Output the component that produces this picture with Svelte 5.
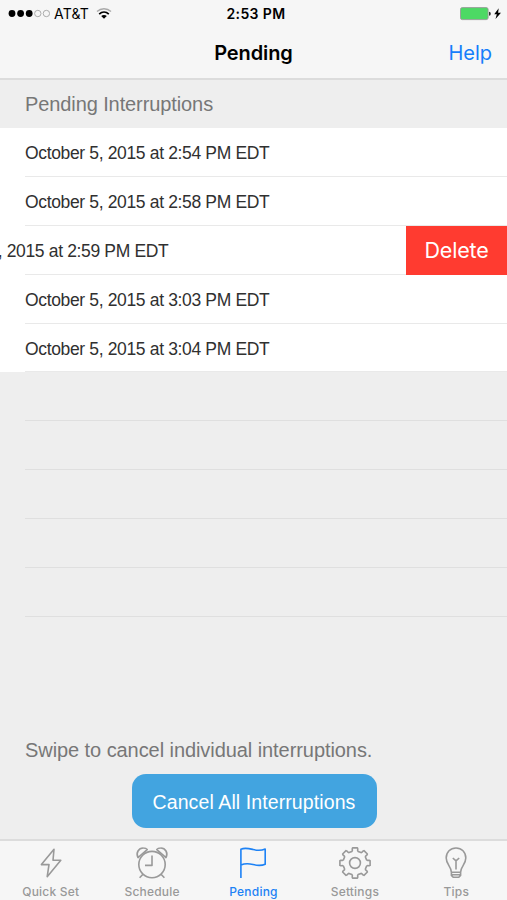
<script>
  const swipeWidth = 101;

  let rows = [
    { time: 'October 5, 2015 at 2:54 PM EDT' },
    { time: 'October 5, 2015 at 2:58 PM EDT' },
    { time: 'October 5, 2015 at 2:59 PM EDT', swiped: true },
    { time: 'October 5, 2015 at 3:03 PM EDT' },
    { time: 'October 5, 2015 at 3:04 PM EDT' }
  ];

  const emptyRows = [1, 2, 3, 4, 5];

  const tabs = [
    { id: 'quick', label: 'Quick Set' },
    { id: 'schedule', label: 'Schedule' },
    { id: 'pending', label: 'Pending' },
    { id: 'settings', label: 'Settings' },
    { id: 'tips', label: 'Tips' }
  ];
  let active = $state('pending');

  // Outline of the settings gear, eight teeth around the centre
  function gearPath(teeth, inner, outer) {
    const step = 360 / teeth;
    const points = [];
    for (let i = 0; i < teeth; i++) {
      const corners = [[-15, inner], [-12, inner + 0.7], [-11, outer - 0.8], [-9, outer], [9, outer], [11, outer - 0.8], [12, inner + 0.7], [15, inner]];
      for (const [offset, r] of corners) {
        const a = ((i * step + offset) * Math.PI) / 180;
        points.push(`${(17 + r * Math.sin(a)).toFixed(2)} ${(17 - r * Math.cos(a)).toFixed(2)}`);
      }
    }
    return `M${points.join('L')}Z`;
  }
</script>

<div class="screen">
  <header>
    <div class="status">
      <div class="carrier">
        <svg width="42" height="10" viewBox="0 0 42 10">
          <g fill="#000">
            <circle cx="4" cy="4.5" r="3.4" />
            <circle cx="12.6" cy="4.5" r="3.4" />
            <circle cx="21.2" cy="4.5" r="3.4" />
          </g>
          <g fill="none" stroke="#999" stroke-width="0.8">
            <circle cx="29.8" cy="4.5" r="3.2" />
            <circle cx="38.4" cy="4.5" r="3.2" />
          </g>
        </svg>
        <span class="network">AT&amp;T</span>
        <svg class="wifi" width="16" height="12" viewBox="0 0 16 12">
          <path d="M1 3.6C5 -.2 11 -.2 15 3.6" fill="none" stroke="#aaa" stroke-width="1.4" />
          <path d="M3.2 6.1C6 3.5 10 3.5 12.8 6.1" fill="none" stroke="#000" stroke-width="1.7" />
          <path d="M5.2 8C6.8 6.5 9.2 6.5 10.8 8L8 10.8Z" fill="#000" />
        </svg>
      </div>
      <span class="clock">2:53 PM</span>
      <svg class="battery" width="42" height="14" viewBox="0 0 42 14">
        <rect x="0.5" y="0.6" width="27.6" height="12" rx="1.8" fill="#4cd964" stroke="#999" stroke-width="0.9" />
        <path d="M29 4.7q1.8 0 1.8 2t-1.8 2z" fill="#333" />
        <path d="M38.7 1.2L34.2 7.3h2.6L35.5 12.1L41 5.7h-2.9z" fill="#000" />
      </svg>
    </div>
    <nav>
      <h1>Pending</h1>
      <button class="help">Help</button>
    </nav>
  </header>

  <main>
    <h2>Pending Interruptions</h2>
    <ul>
      {#each rows as row}
        <li class="row">
          <span class="time" style:margin-left={row.swiped ? `${-swipeWidth}px` : '0'}>{row.time}</span>
          {#if row.swiped}
            <button class="delete">Delete</button>
          {/if}
        </li>
      {/each}
      {#each emptyRows as n (n)}
        <li class="row empty"></li>
      {/each}
    </ul>
    <div class="actions">
      <p>Swipe to cancel individual interruptions.</p>
      <button class="cancel">Cancel All Interruptions</button>
    </div>
  </main>

  <footer>
    {#each tabs as tab (tab.id)}
      <button class="tab" class:active={active === tab.id} onclick={() => (active = tab.id)}>
        <svg width="34" height="34" viewBox="0 0 34 34">
          {#if tab.id === 'quick'}
            <path d="M20 3.2L7.4 18.6L15 18.6L13.2 30.7L26.8 14.3L19 14.3Z" />
          {:else if tab.id === 'schedule'}
            <circle cx="17" cy="18.6" r="13.2" />
            <path d="M17 9.4V19.4H10M8 28.2L4.6 31.8M26 28.2L29.4 31.8" />
            <path d="M3 11.6C.6 7 3.6 1.8 8.4 2q2.6 0 3.8 1.6z" />
            <path d="M31 11.6C33.4 7 30.4 1.8 25.6 2q-2.6 0-3.8 1.6z" />
          {:else if tab.id === 'pending'}
            <path d="M4.9 32V3.2C9 1.4 13 2.5 17 3.5S25 4.8 29.2 3V18.2C25 20 21 19.5 17 18.5S9 17.2 4.9 19" />
          {:else if tab.id === 'settings'}
            <path d={gearPath(8, 12, 15.3)} />
            <circle cx="17" cy="17" r="5.4" />
          {:else}
            <path d="M12.4 26.2C12.4 20.5 7.2 18.5 7.2 12C7.2 6 11.4 2 17 2S26.8 6 26.8 12C26.8 18.5 21.6 20.5 21.6 26.2ZM12.4 26.2V29.4L14.2 31.3H19.8L21.6 29.4V26.2M12.4 28.8H21.6M17 23.5V14.8L13.8 12M17 14.8L20.2 12" />
          {/if}
        </svg>
        <span>{tab.label}</span>
      </button>
    {/each}
  </footer>
</div>

<style>
  :global(body) {
    margin: 0;
    background: #eee;
  }

  .screen {
    display: flex;
    flex-direction: column;
    width: 507px;
    height: 900px;
    overflow: hidden;
    background: #eee;
    font-family: "Liberation Sans", Arial, sans-serif;
  }

  button {
    padding: 0;
    border: 0;
    background: none;
    font: inherit;
    white-space: nowrap;
  }

  header {
    box-sizing: border-box;
    height: 80px;
    border-bottom: 2px solid #dcdcdc;
    background: #f6f6f6;
    font-family: Inter, sans-serif;
  }

  .status {
    display: grid;
    grid-template-columns: 1fr auto 1fr;
    align-items: center;
    height: 27px;
    padding: 0 5px 0 8px;
  }

  .carrier {
    display: flex;
    align-items: center;
  }

  .network {
    margin-left: 4px;
    font-size: 14px;
    letter-spacing: 0.2px;
  }

  .wifi {
    margin-left: 7px;
  }

  .clock {
    padding-left: 2px;
    font-size: 14px;
    font-weight: 600;
    letter-spacing: 0.4px;
  }

  .battery {
    justify-self: end;
  }

  nav {
    display: grid;
    grid-template-columns: 1fr auto 1fr;
    align-items: center;
    height: 51px;
    padding: 0 15px;
  }

  h1 {
    grid-column: 2;
    margin: 0;
    font-size: 20px;
    font-weight: 600;
    letter-spacing: -0.1px;
  }

  .help {
    justify-self: end;
    color: #157efb;
    font-size: 20px;
  }

  main {
    display: flex;
    flex: 1;
    flex-direction: column;
  }

  h2 {
    height: 48px;
    margin: 0;
    padding-left: 25px;
    color: #777;
    font-size: 20px;
    font-weight: 400;
    letter-spacing: -0.1px;
    line-height: 49px;
  }

  ul {
    margin: 0;
    padding: 0;
    list-style: none;
  }

  .row {
    display: flex;
    align-items: center;
    justify-content: space-between;
    box-sizing: border-box;
    height: 48.9px;
    padding-left: 25px;
    background: linear-gradient(#e9e9e9, #e9e9e9) 25px 100% / 100% 1px no-repeat #fff;
  }

  .row.empty {
    background-color: #eee;
    background-image: linear-gradient(#dfdfdf, #dfdfdf);
  }

  .time {
    padding-top: 2px;
    color: #303030;
    font-size: 17.5px;
    letter-spacing: -0.35px;
    white-space: nowrap;
  }

  .delete {
    width: 101px;
    height: 100%;
    background: #ff3b30;
    color: #fff;
    font-family: Inter, sans-serif;
    font-size: 21.5px;
    letter-spacing: -0.2px;
  }

  .actions {
    display: flex;
    flex-direction: column;
    align-items: center;
    margin-top: auto;
    padding-bottom: 11px;
  }

  p {
    align-self: flex-start;
    margin: 0 0 12px;
    padding-left: 25px;
    color: #777;
    font-size: 20px;
    letter-spacing: -0.07px;
    line-height: 24px;
  }

  .cancel {
    width: 245px;
    height: 54px;
    margin-left: 1px;
    padding-top: 2px;
    border-radius: 14px;
    background: #42a4e0;
    color: #fff;
    font-size: 19.5px;
    letter-spacing: 0.1px;
  }

  footer {
    display: grid;
    grid-template-columns: repeat(5, 1fr);
    box-sizing: border-box;
    height: 61px;
    border-top: 2px solid #dcdcdc;
    background: #f6f6f6;
  }

  .tab {
    display: flex;
    flex-direction: column;
    align-items: center;
    padding-top: 5px;
    color: #999;
    font-family: Inter, sans-serif;
    font-size: 12px;
    font-weight: 500;
    letter-spacing: 0.2px;
    line-height: 15px;
  }

  .tab svg {
    margin-bottom: 4px;
    fill: none;
    stroke: currentColor;
    stroke-width: 1.6;
    stroke-linejoin: round;
  }

  .tab.active {
    color: #1d82f5;
  }
</style>
